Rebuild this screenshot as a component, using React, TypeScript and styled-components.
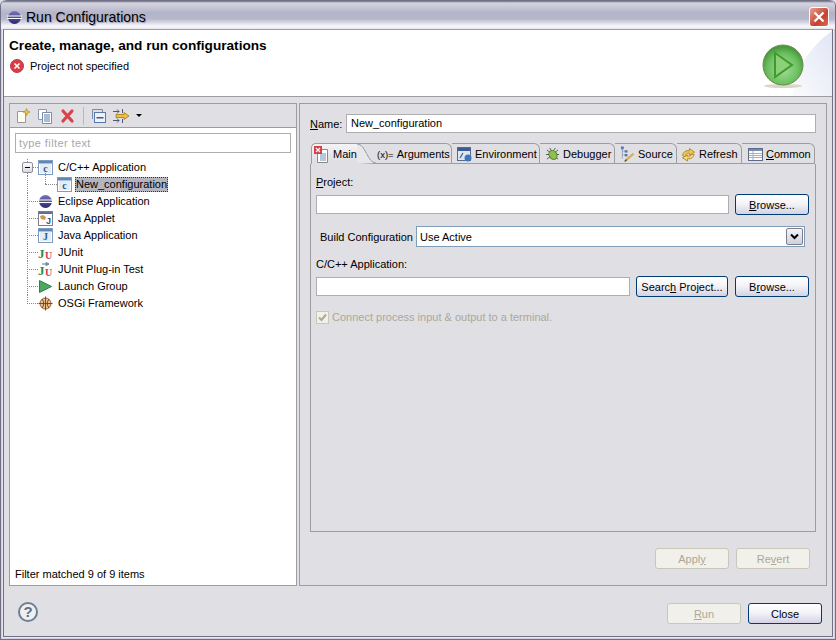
import React from 'react';
import styled, {createGlobalStyle} from 'styled-components';

const GlobalStyle = createGlobalStyle`
	html, body {
		margin: 0;
		padding: 0;
		background: #e0dfe3;
	}
	* {
		box-sizing: border-box;
	}
	u {
		text-decoration: underline;
	}
`;

const Frame = styled.div`
	width: 836px;
	height: 640px;
	display: flex;
	flex-direction: column;
	overflow: hidden;
	font-family: "Liberation Sans", Arial, sans-serif;
	font-size: 11px;
	color: #000;
	border: 1px solid #6f6f85;
	border-top: none;
	border-radius: 6px 6px 0 0;
	background: #cfcfdc;
`;

const TitleBar = styled.div`
	height: 29px;
	flex: none;
	display: flex;
	align-items: center;
	padding: 5px 6px 0 6px;
	gap: 4px;
	font-size: 14px;
	background: linear-gradient(#6f6f85 0, #6f6f85 1px, #d4d4e0 3px, #b4b4c8 13px, #b8b8cc 19px, #f6f6fa 26px, #eeeef3 29px);
	border-radius: 6px 6px 0 0;
`;

const TitleText = styled.span`
	flex: 1;
	text-shadow: 1px 1px 1px #9a9ab0;
`;

const CloseBox = styled.div`
	width: 20px;
	height: 20px;
	border: 1px solid #fff;
	border-radius: 3px;
	background: linear-gradient(135deg, #e8a090, #c8402f 60%, #d86a58);
	display: flex;
	align-items: center;
	justify-content: center;
`;

const Client = styled.div`
	flex: 1;
	margin: 0 2px 2px 2px;
	border: 1px solid #6f6f85;
	border-top: 1px solid #9d9da1;
	outline: 1px solid #e8e8ee;
	background: #e0dfe3;
	display: flex;
	flex-direction: column;
	min-height: 0;
`;

const Banner = styled.div`
	height: 67px;
	flex: none;
	position: relative;
	background: #fff;
	border-bottom: 1px solid #9d9da1;
	padding: 7px 0 0 5px;
`;

const BannerTitle = styled.div`
	font-size: 13.65px;
	font-weight: bold;
	line-height: 17px;
`;

const BannerMessage = styled.div`
	display: flex;
	align-items: center;
	gap: 6px;
	margin-top: 5px;
	height: 14px;
	padding-left: 1px;
`;

const BannerArt = styled.svg`
	position: absolute;
	right: 0;
	top: 0;
`;

const Main = styled.div`
	flex: 1;
	min-height: 0;
	display: flex;
	gap: 2px;
	padding: 6px 5px 0 5px;
`;

const LeftPanel = styled.div`
	width: 288px;
	flex: none;
	display: flex;
	flex-direction: column;
	border: 1px solid #9d9da1;
`;

const Toolbar = styled.div`
	height: 24px;
	flex: none;
	display: flex;
	align-items: center;
	padding-left: 5px;
	gap: 6px;
	border-bottom: 1px solid #9d9da1;
`;

const ToolSeparator = styled.div`
	width: 1px;
	height: 18px;
	background: #b8b8c0;
	margin: 0 1px 0 2px;
`;

const DropArrow = styled.div`
	width: 0;
	height: 0;
	border-left: 3px solid transparent;
	border-right: 3px solid transparent;
	border-top: 3px solid #000;
	margin-left: -1px;
`;

const LeftBody = styled.div`
	flex: 1;
	min-height: 0;
	display: flex;
	flex-direction: column;
	background: #fff;
	padding: 5px 5px 3px 5px;
`;

const FilterBox = styled.div`
	height: 20px;
	flex: none;
	border: 1px solid #aeaeb2;
	padding: 0 3px;
	line-height: 18px;
	color: #a8a8a8;
	letter-spacing: 0.4px;
`;

const Tree = styled.div`
	flex: 1;
	padding-top: 6px;
`;

const TreeRow = styled.div<{$child?: boolean}>`
	height: 17px;
	display: flex;
	align-items: center;
	gap: 3px;
	padding-left: ${p => (p.$child ? 42 : 23)}px;
	position: relative;
	&::before {
		content: '';
		position: absolute;
		left: ${p => (p.$child ? 30 : 12)}px;
		width: ${p => (p.$child ? 12 : 11)}px;
		top: 8px;
		border-top: 1px dotted #888;
	}
`;

const RootGuide = styled.div<{$last?: boolean}>`
	position: absolute;
	left: 12px;
	top: 0;
	height: ${p => (p.$last ? 9 : 17)}px;
	border-left: 1px dotted #888;
`;

const ChildGuide = styled.div`
	position: absolute;
	left: 30px;
	top: -3px;
	height: 11px;
	border-left: 1px dotted #888;
`;

const Expander = styled.div`
	position: absolute;
	left: 7px;
	top: 3px;
	width: 11px;
	height: 11px;
	border: 1px solid #8f8f9a;
	border-radius: 2px;
	background: linear-gradient(#fff, #d8d8e0);
	display: flex;
	align-items: center;
	justify-content: center;
	&::after {
		content: '';
		width: 5px;
		height: 1px;
		background: #000;
	}
`;

const TreeLabel = styled.span<{$selected?: boolean}>`
	line-height: 15px;
	padding: 0 1px;
	margin-left: 1px;
	white-space: nowrap;
	${p => p.$selected && 'background: #b5b5bd; outline: 1px dotted #333; outline-offset: -1px; margin-left: 0;'}
`;

const StatusLine = styled.div`
	height: 16px;
	line-height: 16px;
	flex: none;
`;

const RightPanel = styled.div`
	flex: 1;
	display: flex;
	flex-direction: column;
	border: 1px solid #9d9da1;
	padding: 10px 10px 15px 10px;
`;

const NameRow = styled.div`
	display: flex;
	align-items: center;
	gap: 6px;
	height: 19px;
`;

const NameLabel = styled.span`
	width: 30px;
	flex: none;
`;

const TextField = styled.div`
	flex: 1;
	height: 19px;
	background: #fff;
	border: 1px solid #aeaeb2;
	line-height: 17px;
	padding: 0 4px;
`;

const TabFolder = styled.div`
	margin-top: 10px;
	height: 389px;
	flex: none;
	display: flex;
	flex-direction: column;
`;

const TabStrip = styled.div`
	height: 21px;
	flex: none;
	display: flex;
	padding-left: 1px;
	position: relative;
	z-index: 1;
`;

const Tab = styled.div<{$w: number; $pad?: number}>`
	width: ${p => p.$w}px;
	flex: none;
	display: flex;
	align-items: center;
	gap: 3px;
	padding-left: ${p => p.$pad ?? 5}px;
	padding-top: 1px;
	white-space: nowrap;
	border-top: 1px solid #9d9da1;
	border-right: 1px solid #9d9da1;
	border-bottom: 1px solid #9d9da1;
	border-top-right-radius: 6px;
`;

const ActiveTab = styled.div<{$w: number}>`
	width: ${p => p.$w}px;
	flex: none;
	display: flex;
	align-items: center;
	gap: 3px;
	padding-left: 2px;
	white-space: nowrap;
	position: relative;
	z-index: 1;
	border-top: 1px solid #9d9da1;
	border-left: 1px solid #9d9da1;
	border-top-left-radius: 5px;
	background: linear-gradient(#f4f4f6, #e0dfe3 85%);
`;

const TabCurve = styled.svg`
	position: absolute;
	right: -20px;
	top: -1px;
`;

const VarGlyph = styled.span`
	font-size: 9.5px;
`;

const TabBody = styled.div`
	flex: 1;
	min-height: 0;
	display: flex;
	flex-direction: column;
	border: 1px solid #9d9da1;
	border-top: none;
	padding: 0 6px 0 5px;
`;

const FieldLabel = styled.div<{$top: number}>`
	height: 14px;
	line-height: 14px;
	margin-top: ${p => p.$top}px;
`;

const FieldRow = styled.div<{$top: number}>`
	display: flex;
	align-items: center;
	gap: 6px;
	height: 21px;
	margin-top: ${p => p.$top}px;
`;

const PushButton = styled.div<{$w?: number; $disabled?: boolean; $after?: number}>`
	width: ${p => p.$w ?? 74}px;
	height: 21px;
	flex: none;
	display: flex;
	align-items: center;
	justify-content: center;
	border-radius: 3px;
	margin-right: ${p => p.$after ?? 0}px;
	border: 1px solid ${p => (p.$disabled ? '#c9c7ba' : '#003c74')};
	color: ${p => (p.$disabled ? '#aca899' : '#000')};
	background: ${p => (p.$disabled ? '#f1f0ea' : 'linear-gradient(#fff, #f4f4f8 45%, #d4d2e4)')};
`;

const BuildLabel = styled.span`
	width: 100px;
	padding-left: 4px;
	flex: none;
	white-space: nowrap;
`;

const Combo = styled.div`
	width: 389px;
	height: 21px;
	flex: none;
	display: flex;
	align-items: center;
	background: #fff;
	border: 1px solid #7f9db9;
	padding: 0 1px 0 3px;
	margin-left: -6px;
`;

const ComboText = styled.span`
	flex: 1;
`;

const ComboButton = styled.div`
	width: 17px;
	height: 17px;
	border: 1px solid #7f7f8f;
	border-radius: 2px;
	background: linear-gradient(#f4f4f8, #d0d0dc);
	display: flex;
	align-items: center;
	justify-content: center;
`;

const CheckRow = styled.div`
	display: flex;
	align-items: center;
	gap: 3px;
	margin-top: 13px;
	height: 14px;
	color: #aca899;
`;

const CheckBox = styled.div`
	width: 13px;
	height: 13px;
	border: 1px solid #c9c7ba;
	background: #f1f0ea;
	display: flex;
	align-items: center;
	justify-content: center;
`;

const ButtonRow = styled.div<{$right: number; $top: number}>`
	display: flex;
	justify-content: flex-end;
	gap: 7px;
	padding-right: ${p => p.$right}px;
	margin-top: ${p => p.$top}px;
`;

const Footer = styled.div`
	height: 50px;
	flex: none;
	display: flex;
	align-items: flex-start;
	justify-content: space-between;
	padding: 16px 10px 0 14px;
`;

const HelpIcon = styled.div`
	width: 20px;
	height: 20px;
	border-radius: 50%;
	border: 2px solid #6f7f93;
	background: #eef0f4;
	color: #5f6f85;
	font-weight: bold;
	font-size: 15px;
	line-height: 16px;
	text-align: center;
`;

const ChipIcon = ({letter}: {letter: string}) => (
	<svg width="15" height="15" viewBox="0 0 15 15">
		<rect x="0.5" y="0.5" width="14" height="14" fill="#fff" stroke="#7d9cc0"/>
		<rect x="1" y="1" width="13" height="2.5" fill="#5f86b8"/>
		<rect x="2" y="4" width="11" height="9" fill="#e4ecf6"/>
		<text x="7.5" y="12" fontSize="10" fontWeight="bold" textAnchor="middle" fontFamily="Liberation Serif" fill="#2c5a8c">{letter}</text>
	</svg>
);

const OrbIcon = () => (
	<svg width="15" height="15" viewBox="0 0 15 15">
		<defs>
			<linearGradient id="orb" x1="0" y1="0" x2="0" y2="1">
				<stop offset="0" stopColor="#7a74b8"/>
				<stop offset="1" stopColor="#2c2670"/>
			</linearGradient>
		</defs>
		<circle cx="7.5" cy="7.5" r="6.5" fill="url(#orb)"/>
		<rect x="0" y="5.5" width="15" height="1" fill="#fff"/>
		<rect x="0" y="8" width="15" height="1" fill="#fff"/>
	</svg>
);

const AppletIcon = () => (
	<svg width="15" height="15" viewBox="0 0 15 15">
		<rect x="0.5" y="0.5" width="14" height="14" fill="#fff" stroke="#7d7d90"/>
		<rect x="1" y="1" width="13" height="2" fill="#5f6f98"/>
		<path d="M2 5 L5 4 L8 6 L7 9 L3 8 Z" fill="#c89a50"/>
		<text x="10.5" y="12.5" fontSize="9" fontWeight="bold" textAnchor="middle" fontFamily="Liberation Sans" fill="#2c5a8c">J</text>
	</svg>
);

const JUnitIcon = ({plugin}: {plugin?: boolean}) => (
	<svg width="15" height="15" viewBox="0 0 15 15">
		{plugin && <path d="M4 2 H8 M8 0.5 L11 2 L8 3.5 Z" stroke="#5878b0" fill="#e0b040" strokeWidth="1"/>}
		<text x="0" y="13" fontSize="13" fontWeight="bold" fontFamily="Liberation Serif" fill="#2e8a50">J</text>
		<text x="7" y="14" fontSize="10" fontWeight="bold" fontFamily="Liberation Serif" fill="#c83c48">U</text>
	</svg>
);

const LaunchIcon = () => (
	<svg width="15" height="15" viewBox="0 0 15 15">
		<path d="M1.5 1.5 L13.5 7.5 L1.5 13.5 Z" fill="#4aa860" stroke="#2f8048"/>
	</svg>
);

const OsgiIcon = () => (
	<svg width="15" height="15" viewBox="0 0 15 15">
		<circle cx="7.5" cy="7.5" r="5.5" fill="#e8c090" stroke="#9a6030"/>
		<path d="M7.5 0.5 V14.5 M0.5 7.5 H14.5 M4 3 Q7.5 7.5 4 12 M11 3 Q7.5 7.5 11 12" stroke="#8a4020" strokeWidth="1" fill="none"/>
	</svg>
);

const ErrorIcon = () => (
	<svg width="14" height="14" viewBox="0 0 14 14">
		<circle cx="7" cy="7" r="6.5" fill="#dc3c44" stroke="#b04048"/>
		<path d="M4.5 4.5 L9.5 9.5 M9.5 4.5 L4.5 9.5" stroke="#fff" strokeWidth="1.6"/>
	</svg>
);

const NewIcon = () => (
	<svg width="16" height="16" viewBox="0 0 16 16">
		<path d="M2.5 3.5 H10.5 V14.5 H2.5 Z" fill="#fdfdf6" stroke="#9a9a88"/>
		<path d="M11.5 0.5 L12.5 3 L15 4 L12.5 5 L11.5 7.5 L10.5 5 L8 4 L10.5 3 Z" fill="#f0c840" stroke="#a88020" strokeWidth="0.6"/>
	</svg>
);

const DuplicateIcon = () => (
	<svg width="16" height="16" viewBox="0 0 16 16">
		<path d="M1.5 1.5 H9.5 V11.5 H1.5 Z" fill="#fff" stroke="#8a9ab0"/>
		<path d="M5.5 4.5 H14.5 V15.5 H5.5 Z" fill="#fff" stroke="#7a8ca8"/>
		<path d="M7 7 H13 M7 9 H13 M7 11 H13 M7 13 H13" stroke="#5878a8"/>
	</svg>
);

const DeleteIcon = () => (
	<svg width="16" height="16" viewBox="0 0 16 16">
		<path d="M4 3 L13 13 M13 3 L4 13" stroke="#d8424a" strokeWidth="3.2" strokeLinecap="round"/>
	</svg>
);

const CollapseIcon = () => (
	<svg width="16" height="16" viewBox="0 0 16 16">
		<path d="M1.5 1.5 H11.5 V4 M1.5 1.5 V11" fill="none" stroke="#7a8ca8"/>
		<rect x="3.5" y="4.5" width="11" height="10" fill="#eef2f8" stroke="#5878a8"/>
		<rect x="5.5" y="9" width="7" height="1.5" fill="#3a5a90"/>
	</svg>
);

const FilterIcon = () => (
	<svg width="18" height="16" viewBox="0 0 18 16">
		<path d="M0 3.5 H6 M4 1.5 L6 3.5 L4 5.5 M0 12.5 H6 M4 10.5 L6 12.5 L4 14.5" fill="none" stroke="#4a5a78"/>
		<path d="M9.5 1 V5 M9.5 11 V15" stroke="#4a5a78"/>
		<path d="M3 6.5 H11 V4.5 L16 8 L11 11.5 V9.5 H3 Z" fill="#f0c040" stroke="#a87818" strokeWidth="0.8"/>
	</svg>
);

const MainTabIcon = () => (
	<svg width="16" height="17" viewBox="0 0 16 17">
		<path d="M3.5 3.5 H13.5 V16.5 H3.5 Z" fill="#fff" stroke="#8a8a80"/>
		<path d="M6 8 H12 M6 10 H12 M6 12 H12 M6 14 H12" stroke="#7090b8"/>
		<rect x="0" y="0" width="8" height="8" fill="#d83c44"/>
		<path d="M2 2 L6 6 M6 2 L2 6" stroke="#fff" strokeWidth="1.2"/>
	</svg>
);

const EnvIcon = () => (
	<svg width="15" height="15" viewBox="0 0 15 15">
		<rect x="0.5" y="0.5" width="13" height="13" fill="#dfe6f0" stroke="#5a6a88"/>
		<rect x="1" y="1" width="12" height="3" fill="#3a5a90"/>
		<path d="M3 11 L6 6" stroke="#3a5a90" strokeWidth="1.2"/>
		<circle cx="11" cy="11" r="3.5" fill="#3a78c0"/>
	</svg>
);

const BugIcon = () => (
	<svg width="15" height="15" viewBox="0 0 16 16">
		<path d="M2 3 L14 13 M14 3 L2 13 M1 8 H15 M5 1 L7 4 M11 1 L9 4" stroke="#4a5a40" strokeWidth="1"/>
		<ellipse cx="8.5" cy="8.5" rx="4" ry="5" fill="#8ec04c" stroke="#4e7a30" transform="rotate(-35 8.5 8.5)"/>
	</svg>
);

const SourceIcon = () => (
	<svg width="15" height="16" viewBox="0 0 16 17">
		<path d="M2.5 2 V13 M2.5 5.5 H5 M2.5 9.5 H5" stroke="#5878a8" strokeDasharray="1 1"/>
		<rect x="1" y="0.5" width="3" height="3" fill="#5878a8"/>
		<rect x="5" y="4.5" width="3" height="2.5" fill="#5878a8"/>
		<rect x="5" y="8.5" width="3" height="2.5" fill="#5878a8"/>
		<path d="M6 15.5 L14.5 8" stroke="#d8b050" strokeWidth="2.4"/>
		<path d="M5 16.5 L7 14.5" stroke="#554030" strokeWidth="1.4"/>
	</svg>
);

const RefreshIcon = () => (
	<svg width="15" height="15" viewBox="0 0 16 16">
		<path d="M1.5 9 Q3 3 9 4 L9 1.5 L14.5 5.5 L9 8.5 L9 6.5 Q5 6 4.5 11 Z" fill="#f0c850" stroke="#a87818" strokeWidth="0.8"/>
		<path d="M14 8 Q13 13 7 12.5 L7 15 L1.5 11.5 L7 8.5 L7 10 Q10 10 11.5 8 Z" fill="#f4d878" stroke="#a87818" strokeWidth="0.8"/>
	</svg>
);

const CommonIcon = () => (
	<svg width="15" height="13" viewBox="0 0 15 13">
		<rect x="0.5" y="0.5" width="14" height="12" fill="#fff" stroke="#5a6a88"/>
		<rect x="1" y="1" width="13" height="2" fill="#7a8cac"/>
		<path d="M1 5.5 H14 M1 7.5 H14 M1 9.5 H14 M5 3 V12" stroke="#a0b0c8"/>
	</svg>
);

const treeItems = [
	{label: 'Eclipse Application', icon: <OrbIcon/>},
	{label: 'Java Applet', icon: <AppletIcon/>},
	{label: 'Java Application', icon: <ChipIcon letter="J"/>},
	{label: 'JUnit', icon: <JUnitIcon/>},
	{label: 'JUnit Plug-in Test', icon: <JUnitIcon plugin/>},
	{label: 'Launch Group', icon: <LaunchIcon/>},
	{label: 'OSGi Framework', icon: <OsgiIcon/>},
];

const App = () => {
	return (
		<Frame>
			<GlobalStyle/>
			<TitleBar>
				<OrbIcon/>
				<TitleText>Run Configurations</TitleText>
				<CloseBox>
					<svg width="12" height="12" viewBox="0 0 12 12">
						<path d="M1.5 1.5 L10.5 10.5 M10.5 1.5 L1.5 10.5" stroke="#fff" strokeWidth="2.4"/>
					</svg>
				</CloseBox>
			</TitleBar>
			<Client>
				<Banner>
					<BannerTitle>Create, manage, and run configurations</BannerTitle>
					<BannerMessage>
						<ErrorIcon/>
						<span>Project not specified</span>
					</BannerMessage>
					<BannerArt width="80" height="66" viewBox="0 0 80 66">
						<defs>
							<radialGradient id="ball" cx="0.5" cy="0.6" r="0.55">
								<stop offset="0" stopColor="#a8dc98"/>
								<stop offset="0.7" stopColor="#6cc060"/>
								<stop offset="1" stopColor="#4a9a3c"/>
							</radialGradient>
							<linearGradient id="sweep" x1="1" y1="0" x2="0" y2="1">
								<stop offset="0" stopColor="#e2e6f4"/>
								<stop offset="1" stopColor="#fbfbfe"/>
							</linearGradient>
						</defs>
						<path d="M40 66 C44 40 56 18 80 1 V66 Z" fill="url(#sweep)"/>
						<ellipse cx="31" cy="56" rx="19" ry="2" fill="#d8d8c8"/>
						<circle cx="31" cy="35" r="20" fill="url(#ball)" stroke="#6f8a50"/>
						<path d="M23 23 L40 35 L23 47 Z" fill="#8cd078" stroke="#3f9a30" strokeWidth="2"/>
					</BannerArt>
				</Banner>
				<Main>
					<LeftPanel>
						<Toolbar>
							<NewIcon/>
							<DuplicateIcon/>
							<DeleteIcon/>
							<ToolSeparator/>
							<CollapseIcon/>
							<FilterIcon/>
							<DropArrow/>
						</Toolbar>
						<LeftBody>
							<FilterBox>type filter text</FilterBox>
							<Tree>
								<TreeRow>
									<RootGuide/>
									<Expander/>
									<ChipIcon letter="c"/>
									<TreeLabel>C/C++ Application</TreeLabel>
								</TreeRow>
								<TreeRow $child>
									<RootGuide/>
									<ChildGuide/>
									<ChipIcon letter="c"/>
									<TreeLabel $selected>New_configuration</TreeLabel>
								</TreeRow>
								{treeItems.map((item, i) => (
									<TreeRow key={item.label}>
										<RootGuide $last={i === treeItems.length - 1}/>
										{item.icon}
										<TreeLabel>{item.label}</TreeLabel>
									</TreeRow>
								))}
							</Tree>
							<StatusLine>Filter matched 9 of 9 items</StatusLine>
						</LeftBody>
					</LeftPanel>
					<RightPanel>
						<NameRow>
							<NameLabel><u>N</u>ame:</NameLabel>
							<TextField>New_configuration</TextField>
						</NameRow>
						<TabFolder>
							<TabStrip>
								<ActiveTab $w={46}>
									<MainTabIcon/>
									<span>Main</span>
									<TabCurve width="20" height="21" viewBox="0 0 20 21">
										<path d="M0 1 C9 1 10 20 19 20 L0 21 Z" fill="#e8e8ec"/>
										<path d="M0 1 C9 1 10 20 19 20" fill="none" stroke="#9d9da1"/>
									</TabCurve>
								</ActiveTab>
								<Tab $w={95} $pad={20}>
									<VarGlyph>(x)=</VarGlyph>
									<span>Arguments</span>
								</Tab>
								<Tab $w={88}><EnvIcon/><span>Environment</span></Tab>
								<Tab $w={75}><BugIcon/><span>Debugger</span></Tab>
								<Tab $w={62}><SourceIcon/><span>Source</span></Tab>
								<Tab $w={65} $pad={4}><RefreshIcon/><span>Refresh</span></Tab>
								<Tab $w={73} $pad={6}><CommonIcon/><span><u>C</u>ommon</span></Tab>
							</TabStrip>
							<TabBody>
								<FieldLabel $top={11}><u>P</u>roject:</FieldLabel>
								<FieldRow $top={5}>
									<TextField/>
									<PushButton><span><u>B</u>rowse...</span></PushButton>
								</FieldRow>
								<FieldRow $top={11}>
									<BuildLabel>Build Configuration</BuildLabel>
									<Combo>
										<ComboText>Use Active</ComboText>
										<ComboButton>
											<svg width="9" height="7" viewBox="0 0 9 7">
												<path d="M1 1.5 L4.5 5 L8 1.5" fill="none" stroke="#000" strokeWidth="2"/>
											</svg>
										</ComboButton>
									</Combo>
								</FieldRow>
								<FieldLabel $top={10}>C/C++ Application:</FieldLabel>
								<FieldRow $top={5}>
									<TextField/>
									<PushButton $w={92} $after={1}><span>Searc<u>h</u> Project...</span></PushButton>
									<PushButton><span>B<u>r</u>owse...</span></PushButton>
								</FieldRow>
								<CheckRow>
									<CheckBox>
										<svg width="9" height="9" viewBox="0 0 9 9">
											<path d="M1 4.5 L3.5 7 L8 1.5" fill="none" stroke="#aca899" strokeWidth="2"/>
										</svg>
									</CheckBox>
									<span>Connect process input &amp; output to a terminal.</span>
								</CheckRow>
							</TabBody>
						</TabFolder>
						<ButtonRow $right={6} $top={16}>
							<PushButton $disabled><span>Appl<u>y</u></span></PushButton>
							<PushButton $disabled><span>Re<u>v</u>ert</span></PushButton>
						</ButtonRow>
					</RightPanel>
				</Main>
				<Footer>
					<HelpIcon>?</HelpIcon>
					<ButtonRow $right={0} $top={1}>
						<PushButton $disabled><span><u>R</u>un</span></PushButton>
						<PushButton><span>Close</span></PushButton>
					</ButtonRow>
				</Footer>
			</Client>
		</Frame>
	);
};

export default App;
